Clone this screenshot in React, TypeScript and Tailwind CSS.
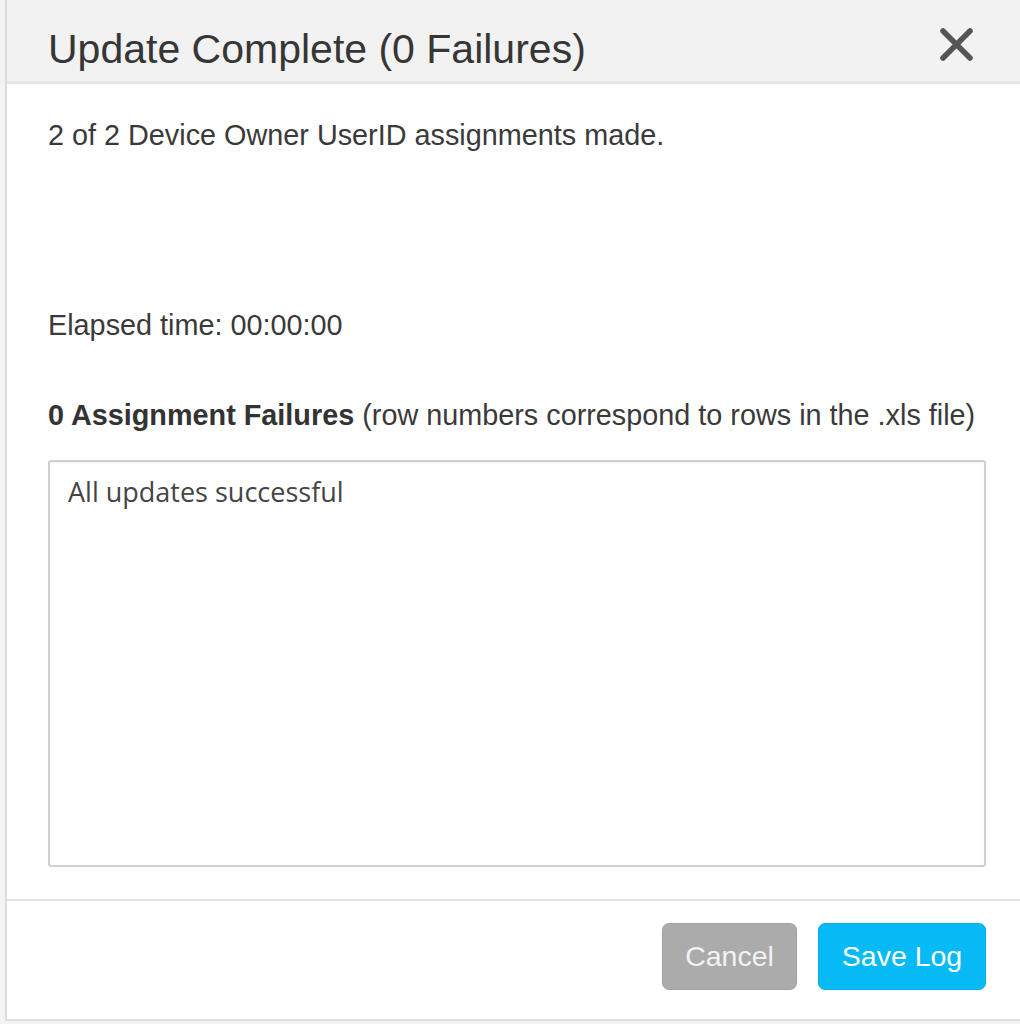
import React from "react";

export default function App() {
  return (
    <div className="w-[1020px] h-[1024px] bg-[#f3f3f3] overflow-hidden font-['Liberation_Sans',Arial,sans-serif]">
      <div className="ml-[5px] w-[1030px] h-[1021px] border-l-2 border-b-2 border-[#dcdcdc] bg-white flex flex-col">
        {/* Header */}
        <div className="h-[84px] bg-[#f2f2f2] border-b-[3px] border-[#e6e6e6] pl-[41px] pt-[25px] flex">
          <div className="w-[938px] flex items-start justify-between">
            <h1 className="text-[41px] leading-[48px] text-[#363636] font-normal">Update Complete (0 Failures)</h1>
            <svg width="33" height="33" viewBox="0 0 33 33" className="mt-[3px] mr-[13px]">
              <line x1="3" y1="3" x2="30" y2="30" stroke="#555555" strokeWidth="5.5" strokeLinecap="round" />
              <line x1="30" y1="3" x2="3" y2="30" stroke="#555555" strokeWidth="5.5" strokeLinecap="round" />
            </svg>
          </div>
        </div>

        {/* Body */}
        <div className="pl-[41px] flex flex-col text-[28.8px] leading-[36px] text-[#3a3a3a]">
          <p className="mt-[33px]">2 of 2 Device Owner UserID assignments made.</p>
          <p className="mt-[154px]">Elapsed time: 00:00:00</p>
          <p className="mt-[54px] whitespace-nowrap">
            <span className="font-bold text-[#333]">0 Assignment Failures</span>{" "}
            <span>(row numbers correspond to rows in the .xls file)</span>
          </p>
          <div className="mt-[27px] w-[938px] h-[407px] border-2 border-[#d0d0d0] rounded-[3px] shadow-[inset_0_1px_2px_rgba(0,0,0,0.06)] pl-[18px] pt-[12px]">
            <p className="font-['Open_Sans',sans-serif] text-[27px] leading-[36px] text-[#454545]">All updates successful</p>
          </div>
        </div>

        {/* Footer */}
        <div className="mt-[32px] border-t-2 border-[#e4e4e4] pl-[41px] pt-[22px]">
          <div className="w-[938px] flex justify-end gap-[21px]">
            <button className="w-[135px] h-[67px] rounded-[7px] bg-[#ababab] border border-[#a2a2a2] text-[#f2f2f2] text-[28.5px]">
              Cancel
            </button>
            <button className="w-[168px] h-[67px] rounded-[7px] bg-[#05baf5] border border-[#03b0ea] text-white text-[28.5px]">
              Save Log
            </button>
          </div>
        </div>
      </div>
    </div>
  );
}
